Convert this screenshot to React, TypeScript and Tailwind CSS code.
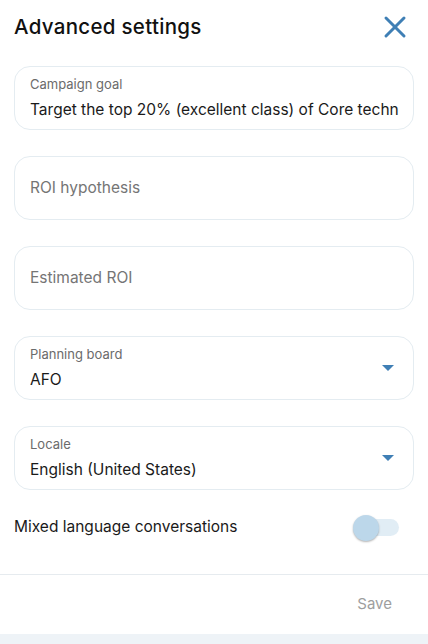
import { X } from "lucide-react";

interface Field {
    label: string,
    value?: string,
    select?: boolean
}

const fields: Field[] = [
    { label: "Campaign goal", value: "Target the top 20% (excellent class) of Core technology accounts" },
    { label: "ROI hypothesis" },
    { label: "Estimated ROI" },
    { label: "Planning board", value: "AFO", select: true },
    { label: "Locale", value: "English (United States)", select: true },
];

function Caret() {
    return (
        <svg width="12" height="6" viewBox="0 0 12 6" className="shrink-0">
            <path d="M0 0 L12 0 L6 6 Z" fill="#3f7fb5" />
        </svg>
    );
}

function FieldBox({ field }: { field: Field }) {
    return (
        <div className={`flex flex-row items-center h-16 w-full rounded-2xl border border-[#e4ecf1] pl-[15px] gap-3 ${field.select ? "pr-[19px]" : "pr-[14px]"}`}>
            {field.value ? (
                <div className="flex flex-col flex-1 min-w-0">
                    <span className="text-[13px] leading-4 text-[#6b6b6b]">{field.label}</span>
                    <span className="text-[15.5px] leading-5 mt-[8px] text-[#1a1a1a] whitespace-nowrap overflow-hidden">{field.value}</span>
                </div>
            ) : (
                <span className="flex-1 text-[15.5px] text-[#757575]">{field.label}</span>
            )}
            {field.select && <Caret />}
        </div>
    );
}

export default function App() {
    return (
        <div className="w-[428px] h-[644px] bg-white flex flex-col font-['Inter',sans-serif] overflow-hidden">
            <div className="flex flex-row items-center justify-between pl-[14px] pr-[15px] h-[52px] pt-[2px]">
                <h2 className="text-[20.5px] font-medium text-[#111] tracking-[0.3px]">Advanced settings</h2>
                <X size={36} strokeWidth={2} color="#3f7fb5" />
            </div>
            <div className="flex flex-col gap-[26px] px-[14px] pt-[14px]">
                {fields.map((field, index) => (
                    <FieldBox key={index} field={field} />
                ))}
            </div>
            <div className="flex flex-row items-center justify-between pl-[14px] pr-[29px] mt-[22px] h-[30px]">
                <span className="text-[15.5px] text-[#1a1a1a]">Mixed language conversations</span>
                <div className="relative w-[44px] h-[17px] rounded-full bg-[#e1edf5]">
                    <div className="absolute left-[-2px] top-[-4px] w-[26px] h-[26px] rounded-full bg-[#bcd7ea] shadow-[0_1px_2px_rgba(0,0,0,0.3)]" />
                </div>
            </div>
            <div className="mt-[32px] border-t border-[#e6ebef]" />
            <div className="flex flex-row justify-end pr-[36px] h-[59px] items-center">
                <span className="text-[15px] text-[#9e9e9e]">Save</span>
            </div>
            <div className="flex-1 bg-[#eef3f7]" />
        </div>
    );
}
